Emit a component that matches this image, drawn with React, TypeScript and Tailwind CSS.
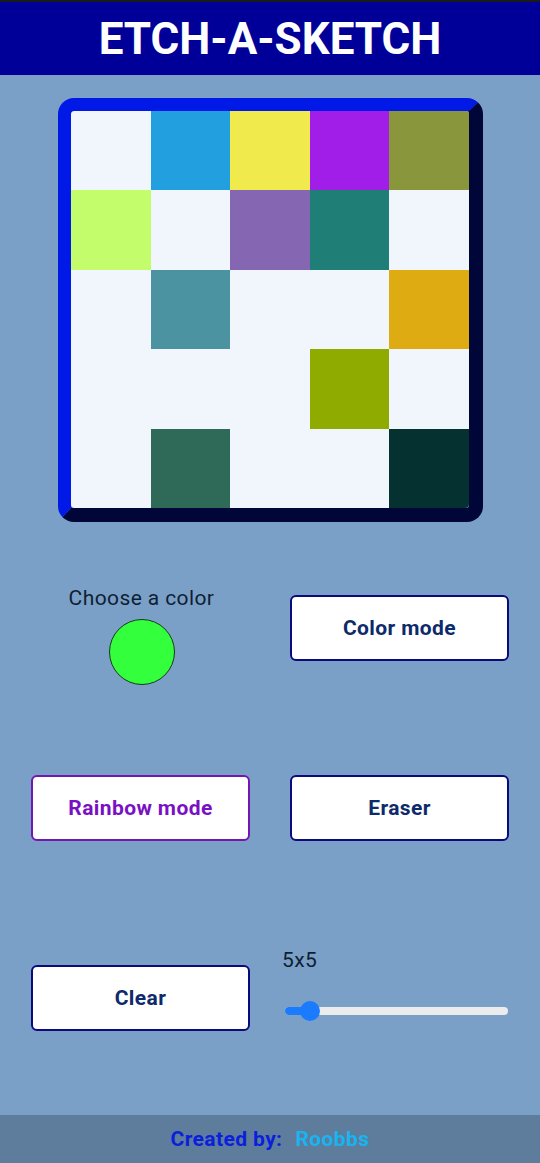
import React from 'react';

const W = '#f1f6fd';

const cells: string[] = [
  W, '#219fdf', '#f0ea4d', '#a11de8', '#8a963c',
  '#c4fd6b', W, '#8466b3', '#1f7e76', W,
  W, '#4c93a1', W, W, '#dfab12',
  W, W, W, '#8fab00', W,
  W, '#2f6958', W, W, '#063131',
];

const Button: React.FC<{ label: string; rainbow?: boolean; className?: string }> = ({ label, rainbow, className }) => (
  <button
    className={
      'w-[219px] h-[66px] pt-[2px] bg-white rounded-[6px] border-2 text-[21px] tracking-[0.4px] font-bold ' +
      (rainbow ? 'border-[#7416b0] text-[#7a10c4] ' : 'border-[#0a0a7c] text-[#0d2a6b] ') +
      (className ?? '')
    }
  >
    {label}
  </button>
);

export default function App() {
  return (
    <div className="min-h-screen flex flex-col bg-[#7aa0c8] font-['Roboto',sans-serif]">
      <div className="h-[2px] bg-[#1a1a1a]" />
      {/* Header */}
      <header className="h-[73px] bg-[#000099] flex items-center justify-center">
        <h1 className="text-white text-[44px] font-bold leading-none">ETCH-A-SKETCH</h1>
      </header>

      {/* Board */}
      <div className="flex justify-center mt-[23px]">
        <div className="w-[425px] h-[424px] ml-[1px] rounded-[16px] border-[13px] border-t-[#0019e6] border-l-[#0019e6] border-r-[#000638] border-b-[#000638] border-r-[14px] border-b-[14px]">
          <div className="w-full h-full grid grid-cols-5 grid-rows-5 rounded-[4px] overflow-hidden">
            {cells.map((c, i) => (
              <div key={i} style={{ backgroundColor: c }} />
            ))}
          </div>
        </div>
      </div>

      {/* Controls */}
      <div className="px-[31px] mt-[64px] flex flex-col">
        <div className="flex gap-[40px] items-start">
          <div className="w-[219px] flex flex-col items-center">
            <p className="text-[21px] tracking-[0.4px] leading-[24px] text-[#0f1f33] pl-[2px]">Choose a color</p>
            <div className="mt-[9px] ml-[2px] w-[66px] h-[66px] rounded-full bg-[#33ff3c] border border-[#1a3a1a]" />
          </div>
          <Button label="Color mode" className="mt-[9px]" />
        </div>

        <div className="flex gap-[40px] mt-[90px]">
          <Button label="Rainbow mode" rainbow />
          <Button label="Eraser" />
        </div>

        <div className="flex gap-[32px] mt-[107px] items-start">
          <Button label="Clear" className="mt-[17px]" />
          <div className="flex-1 flex flex-col">
            <p className="text-[21px] tracking-[0.4px] leading-[24px] text-[#0f1f33]">5x5</p>
            <div className="relative mt-[29px] h-[20px] ml-[3px] mr-[1px] flex items-center">
              <div className="w-full h-[8px] rounded-full bg-[#ececec] flex">
                <div className="w-[25px] h-full rounded-l-full bg-[#1a7bff]" />
              </div>
              <div className="absolute left-[15px] top-0 w-[20px] h-[20px] rounded-full bg-[#1a7bff]" />
            </div>
          </div>
        </div>
      </div>

      {/* Footer */}
      <footer className="mt-auto h-[48px] pt-[2px] bg-[#5e7c9c] flex items-center justify-center text-[21px] tracking-[0.4px] font-bold">
        <span className="text-[#0a1fdc]">Created by:</span>
        <span className="ml-[13px] text-[#18b4f0]">Roobbs</span>
      </footer>
    </div>
  );
}
